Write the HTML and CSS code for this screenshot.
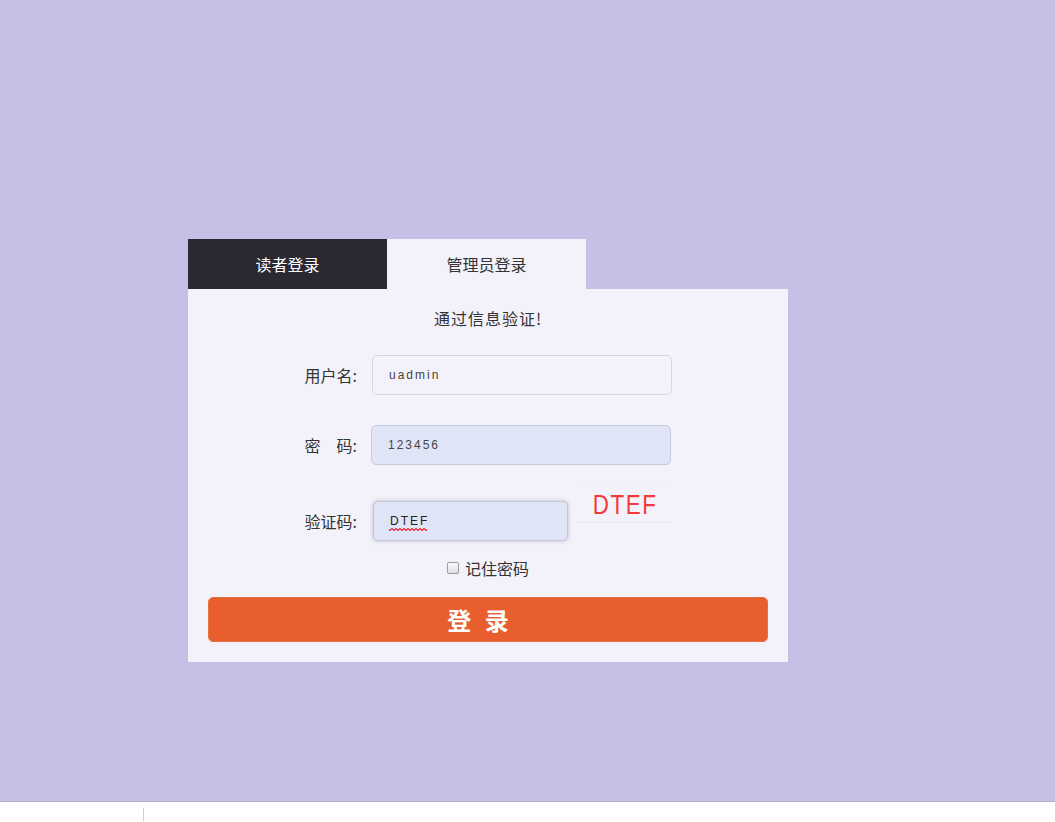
FILE: index.html
```html
<!DOCTYPE html>
<html lang="zh-CN">
<head>
<meta charset="utf-8">
<title>登录</title>
<link rel="stylesheet" href="styles.css">
</head>
<body>
<div class="stage">
  <div class="login">
    <div class="tabs">
      <div class="tab tab-dark">读者登录</div>
      <div class="tab tab-light">管理员登录</div>
    </div>
    <form class="panel">
      <div class="title">通过信息验证!</div>
      <div class="row row-user">
        <label class="label">用户名:</label>
        <input class="field" type="text" value="uadmin">
      </div>
      <div class="row row-pass">
        <label class="label">密<span class="gap"></span>码:</label>
        <input class="field field-fill" type="text" value="123456">
      </div>
      <div class="row row-code">
        <label class="label">验证码:</label>
        <span class="code-wrap"><input class="field field-fill field-code" type="text" value="DTEF"></span>
        <div class="captcha"><span class="captcha-text">DTEF</span></div>
      </div>
      <div class="remember">
        <span class="check"></span>
        <span class="remember-text">记住密码</span>
      </div>
      <button class="submit" type="button">登 录</button>
    </form>
  </div>
</div>
<div class="statusbar">
  <div class="status-cell"></div>
</div>
</body>
</html>
```

FILE: styles.css
```css
* { box-sizing: border-box; }
html, body { margin: 0; padding: 0; }
body {
  font-family: "Noto Sans CJK SC", "Noto Sans", sans-serif;
  color: #333;
  background: #fff;
  width: 1055px;
  height: 822px;
  overflow: hidden;
}
.stage {
  height: 802px;
  background: #c7bfe6;
  border-bottom: 1px solid #b3adc6;
  padding: 239px 0 0 188px;
}
.login { width: 600px; }
.tabs { display: flex; }
.tab {
  width: 199px;
  height: 50px;
  display: flex;
  align-items: center;
  justify-content: center;
  font-size: 16px;
}
.tab-dark { background: #2a2833; color: #fff; }
.tab-light { background: #f3f2fb; color: #333; }
.panel {
  background: #f3f2fb;
  height: 373px;
  padding: 17px 20px 0 20px;
  display: flex;
  flex-direction: column;
}
.title {
  text-align: center;
  font-size: 16px;
  line-height: 24px;
  letter-spacing: 1px;
  color: #333;
}
.row {
  display: flex;
  align-items: center;
  height: 40px;
}
.row-user { margin-top: 25px; }
.row-pass { margin-top: 30px; }
.row-code { margin-top: 36px; }
.label {
  width: 164px;
  text-align: right;
  padding-right: 15px;
  font-size: 16px;
  color: #333;
}
.gap { display: inline-block; width: 16px; }
.field {
  width: 300px;
  height: 40px;
  border: 1px solid #d7d6e4;
  border-radius: 5px;
  background: #f3f2fb;
  padding: 0 16px;
  font-family: "Liberation Sans", Arial, sans-serif;
  font-size: 12px;
  letter-spacing: 2px;
  color: #444;
  outline: none;
}
.row-pass .field { margin-left: -1px; }
.field-fill {
  background: #e0e4f7;
  border-color: #c7c9dc;
}
.code-wrap {
  position: relative;
  display: block;
  margin-left: 1px;
  height: 40px;
}
.code-wrap::after {
  content: "";
  position: absolute;
  left: 16px;
  top: 27px;
  width: 38px;
  height: 3px;
  background:
    linear-gradient(135deg, transparent 40%, #e23 40%, #e23 60%, transparent 60%) 0 0 / 4px 3px repeat-x,
    linear-gradient(45deg, transparent 40%, #e23 40%, #e23 60%, transparent 60%) 2px 0 / 4px 3px repeat-x;
  opacity: 0.8;
}
.field-code {
  width: 195px;
  border-color: #c3c5d8;
  box-shadow: 0 0 4px rgba(0, 0, 0, 0.22);
  color: #222;
}
.captcha {
  margin-left: 8px;
  width: 95px;
  height: 38px;
  margin-top: -34px;
  border-bottom: 1px solid #e8e6f1;
  border-top: 1px solid #f0eef8;
  display: flex;
  align-items: center;
  justify-content: center;
  padding-top: 2px;
}
.captcha-text {
  display: inline-block;
  color: #f23a3a;
  font-family: "Liberation Sans", Arial, sans-serif;
  font-size: 28px;
  letter-spacing: 2px;
  line-height: 1;
  transform: scaleX(0.8);
  padding-left: 4px;
}
.remember {
  margin-top: 16px;
  display: flex;
  align-items: center;
  justify-content: center;
  gap: 6px;
  height: 22px;
}
.check {
  width: 12px;
  height: 12px;
  border: 1px solid #999;
  border-radius: 2px;
  background: linear-gradient(#fcfcfc, #dedede);
}
.remember-text { font-size: 16px; color: #333; }
.submit {
  margin-top: 18px;
  height: 45px;
  width: 560px;
  border: 1px solid #e9733f;
  border-radius: 5px;
  background: #e85e2f;
  color: #fff;
  font-family: "Noto Sans CJK SC", sans-serif;
  font-size: 24px;
  font-weight: bold;
  letter-spacing: 4px;
  padding: 0 16px 0 0;
}
.statusbar {
  height: 19px;
  background: #fff;
  padding-top: 6px;
}
.status-cell {
  width: 144px;
  height: 13px;
  border-right: 1px solid #cfcfcf;
}
```
